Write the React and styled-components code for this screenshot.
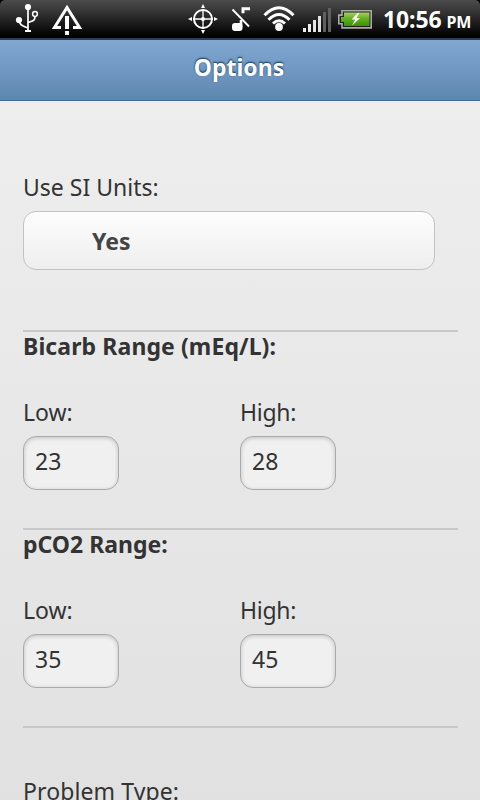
import React from "react";
import styled, { createGlobalStyle } from "styled-components";

const GlobalStyle = createGlobalStyle`
  * { box-sizing: border-box; }
  html, body { margin: 0; padding: 0; background: #000; }
  body { font-family: "Noto Sans", "Open Sans", sans-serif; }
`;

const Screen = styled.div`
  width: 480px;
  height: 800px;
  overflow: hidden;
  display: flex;
  flex-direction: column;
  background: #000;
`;

const StatusBar = styled.div`
  flex: none;
  height: 38px;
  display: flex;
  justify-content: space-between;
  background: linear-gradient(#4b4b4b 0, #3c3c3c 8px, #1c1c1c 23px, #050505 34px, #000 38px);
  border-radius: 5px 5px 0 0;
  color: #fff;
  svg { display: block; flex: none; }
`;

const Tray = styled.div`
  display: flex;
  height: 38px;
`;

const Clock = styled.div`
  display: flex;
  align-items: baseline;
  width: 97px;
  padding-top: 4px;
  font-weight: 700;
  line-height: 30px;
  white-space: nowrap;
`;

const Time = styled.span`
  font-size: 23px;
  letter-spacing: -0.1px;
`;

const Meridiem = styled.span`
  font-size: 16px;
  margin-left: 5px;
  letter-spacing: -0.3px;
`;

const Header = styled.header`
  flex: none;
  height: 63px;
  padding-top: 12px;
  border-top: 2px solid #2c3e55;
  border-bottom: 1px solid #456f9a;
  background: linear-gradient(#81a8d2, #5e87b0);
  text-align: center;
`;

const Title = styled.h1`
  margin: 0;
  padding-right: 2px;
  font-size: 23px;
  line-height: 30px;
  font-weight: 700;
  color: #fff;
  text-shadow: 0 -1.5px 1.5px #254f7a, 0 -1.5px 1.5px #254f7a;
`;

const Content = styled.main`
  flex: 1;
  min-height: 0;
  padding: 71px 22px 0 23px;
  background: linear-gradient(#eeeeee, #e1e1e1);
  color: #333;
`;

const Label = styled.label`
  display: block;
  font-size: 23px;
  line-height: 30px;
  letter-spacing: ${(p) => p.$tracking || "0"};
  white-space: nowrap;
`;

const SelectButton = styled.button`
  display: block;
  width: 412px;
  height: 59px;
  margin: 9px 0 60px;
  padding: 0 0 0 68px;
  border: 1px solid #c3c3c3;
  border-radius: 13px;
  background: linear-gradient(#fdfdfd, #eeeeee);
  font: 700 23px/30px "Noto Sans", sans-serif;
  color: #444;
  text-align: left;
`;

const Section = styled.section`
  height: 198px;
  border-top: 2px solid #c8c8c8;
`;

const SectionTitle = styled.h2`
  margin: -1px 0 36px;
  font-size: 23px;
  line-height: 30px;
  font-weight: 700;
  letter-spacing: ${(p) => p.$tracking || "0"};
`;

const Fields = styled.div`
  display: grid;
  grid-template-columns: 217px 1fr;
`;

const NumberInput = styled.input`
  display: block;
  width: 96px;
  height: 54px;
  margin-top: 9px;
  padding: 0 11px 5px;
  border: 1px solid #aaa;
  border-radius: 13px;
  background: #f0f0f0;
  box-shadow: inset 0 1px 4px rgba(0, 0, 0, 0.2);
  font: 400 23px/30px "Noto Sans", sans-serif;
  color: #333;
`;

const LastSection = styled.section`
  border-top: 2px solid #c8c8c8;
  padding-top: 48px;
`;

function NotificationIcons() {
  return (
    <svg width="100" height="38" viewBox="0 0 100 38" fill="none" stroke="#fff">
      <circle cx="28" cy="7" r="3.1" fill="#fff" stroke="none" />
      <circle cx="19" cy="20" r="3.1" fill="#fff" stroke="none" />
      <circle cx="35" cy="14" r="2.4" strokeWidth="1.5" />
      <path d="M28 7v24M19 20c0 5 4 6 9 8M35 17c0 4-3 4-7 5.5" strokeWidth="1.7" />
      <path d="M25 31h6" strokeWidth="2" />
      <path d="M61 27.5H54.5L67 7.5L79.5 27.5H73" strokeWidth="3" />
      <path d="M67 16v13M67 31v4" strokeWidth="4" />
    </svg>
  );
}

function SystemIcons() {
  return (
    <svg width="203" height="38" viewBox="180 0 203 38" fill="none" stroke="#fff">
      <circle cx="203" cy="19" r="9" strokeWidth="2" />
      <path d="M203 9v20M193 19h20" strokeWidth="1.3" />
      <circle cx="203" cy="19" r="2.1" fill="#fff" stroke="none" />
      <path d="M203 4l2 4h-4zM203 34l2-4h-4zM188 19l4-2v4zM218 19l-4-2v4z" fill="#fff" stroke="none" />
      <path d="M232.5 9.5l16.5 17" strokeWidth="1.8" />
      <path d="M250 8.7h-7v4.6" strokeWidth="3" />
      <path d="M241 20v7" strokeWidth="2.6" />
      <rect x="232" y="23" width="10.5" height="8" rx="3" fill="#fff" stroke="none" />
      <path d="M264.5 15.2Q279 0.2 293.5 15.2M268.5 19.7Q279 9.2 289.5 19.7M273 23.5Q279 18 285 23.5" strokeWidth="3" />
      <circle cx="279" cy="27" r="3.9" fill="#fff" stroke="none" />
      <g stroke="none">
        <rect x="303" y="28" width="3" height="4" fill="#eee" />
        <rect x="308" y="24" width="3" height="8" fill="#eee" />
        <rect x="313" y="20" width="3" height="12" fill="#e6e6e6" />
        <rect x="318" y="16" width="3" height="16" fill="#e2e2e2" />
        <rect x="323" y="12" width="3" height="20" fill="#606060" />
        <rect x="328" y="8" width="3" height="24" fill="#606060" />
      </g>
      <defs>
        <linearGradient id="charge" x1="0" y1="0" x2="0" y2="1">
          <stop offset="0" stopColor="#a3cf62" />
          <stop offset="0.45" stopColor="#65b01f" />
          <stop offset="1" stopColor="#379400" />
        </linearGradient>
      </defs>
      <path d="M342 10.7h29.2v17.2H342v-4.2h-3.2v-8.6h3.2z" fill="#222" stroke="#a9aaa6" strokeWidth="1.6" />
      <path d="M344 12.5h25.5v13.6H344v-4.2h-3v-5h3z" fill="url(#charge)" stroke="none" />
      <path d="M357.5 13l-5.8 6.5h3.5l-3.2 6 8-7.3h-3.5l2.8-5.2z" fill="#fff" stroke="none" />
    </svg>
  );
}

function Range({ title, tracking, low, high }) {
  return (
    <Section>
      <SectionTitle $tracking={tracking}>{title}</SectionTitle>
      <Fields>
        <Label>
          Low:
          <NumberInput defaultValue={low} />
        </Label>
        <Label $tracking="-0.3px">
          High:
          <NumberInput defaultValue={high} />
        </Label>
      </Fields>
    </Section>
  );
}

export default function App() {
  return (
    <Screen>
      <GlobalStyle />
      <StatusBar>
        <NotificationIcons />
        <Tray>
          <SystemIcons />
          <Clock>
            <Time>10:56</Time>
            <Meridiem>PM</Meridiem>
          </Clock>
        </Tray>
      </StatusBar>
      <Header>
        <Title>Options</Title>
      </Header>
      <Content>
        <Label>Use SI Units:</Label>
        <SelectButton>Yes</SelectButton>
        <Range title="Bicarb Range (mEq/L):" tracking="0.1px" low="23" high="28" />
        <Range title="pCO2 Range:" low="35" high="45" />
        <LastSection>
          <Label $tracking="0.1px">Problem Type:</Label>
        </LastSection>
      </Content>
    </Screen>
  );
}
